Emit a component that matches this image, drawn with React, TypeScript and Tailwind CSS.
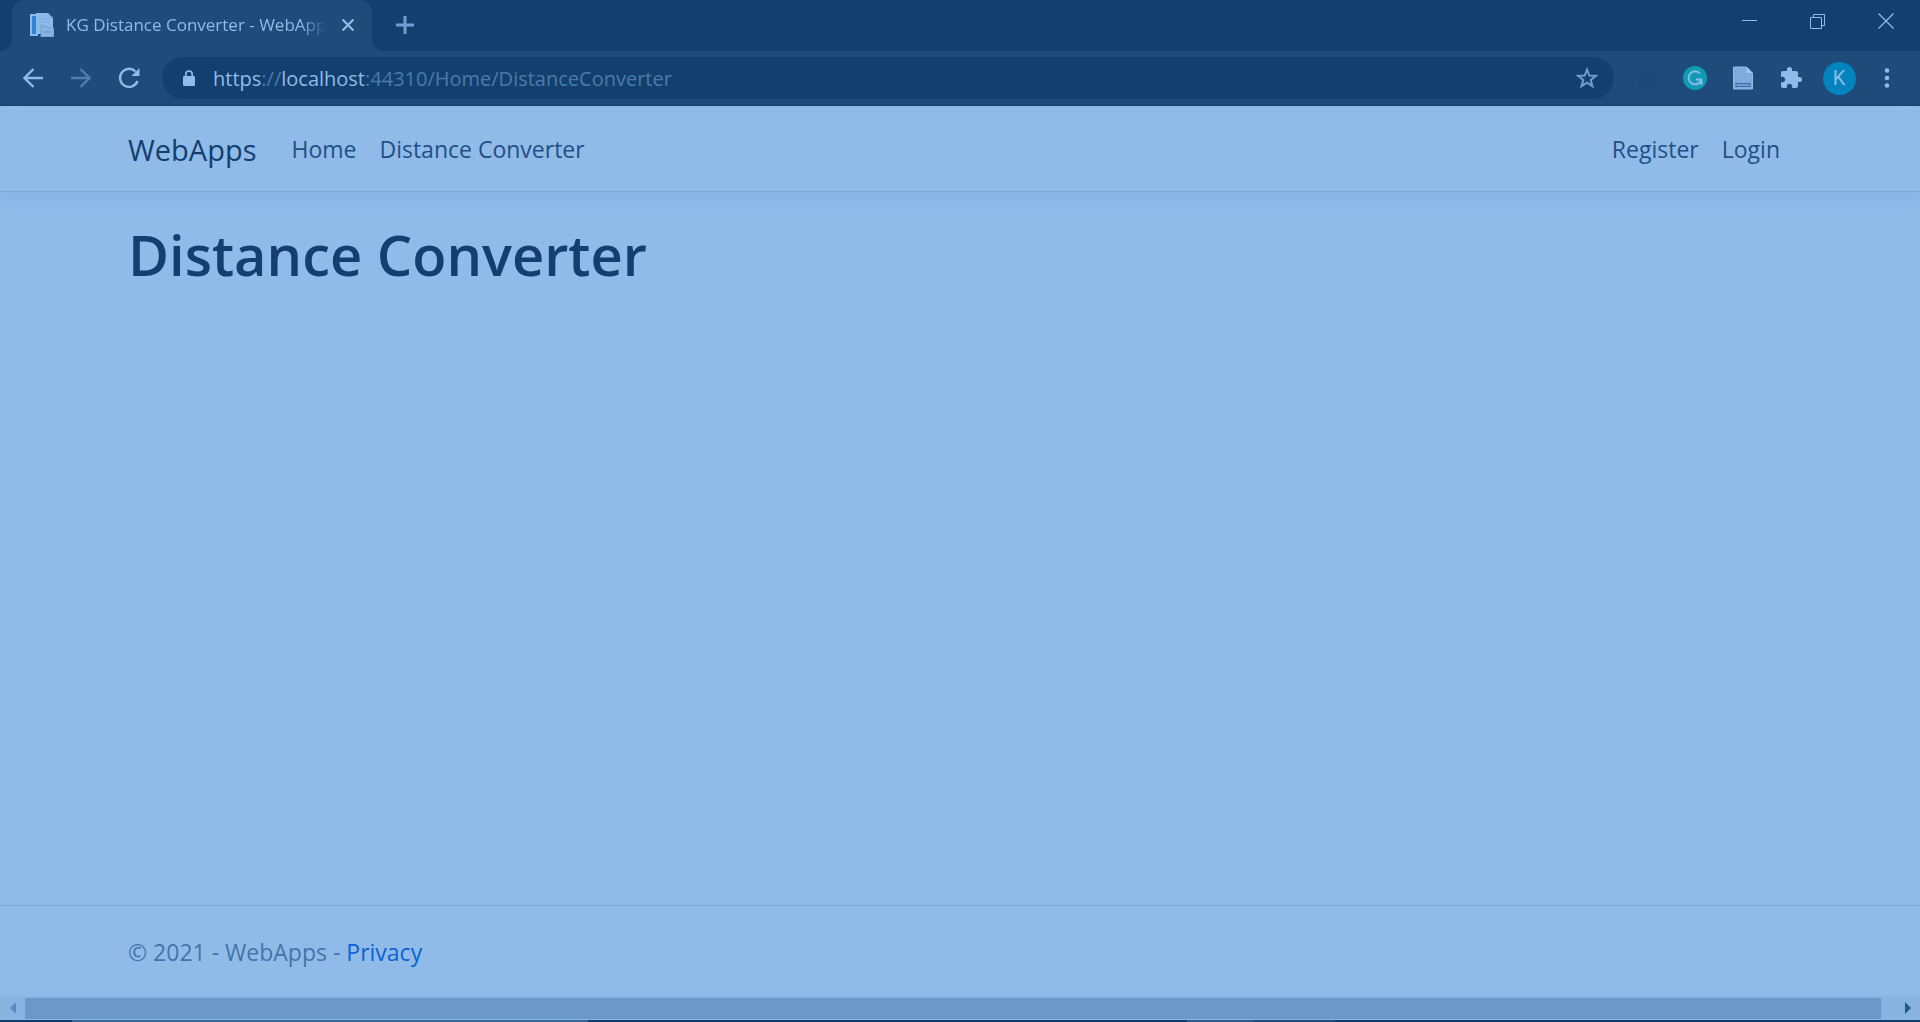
import React from "react";

const iconButton = "flex h-9 w-9 shrink-0 items-center justify-center";

function TabStrip() {
  return (
    <div className="flex h-[51px] items-stretch bg-[#133f6e]">
      <div className="flex w-3 items-end bg-[#1f4b7a]">
        <div className="h-full w-full rounded-br-xl bg-[#133f6e]" />
      </div>
      <div className="bg-[#133f6e]">
        <div className="flex h-full w-[360px] items-center rounded-t-xl bg-[#1f4b7a] pb-0.5 pl-[18px] pr-3">
          <svg className="h-6 w-6 shrink-0" viewBox="0 0 24 24" aria-hidden="true">
            <rect x="0" y="1" width="8" height="22" fill="#8dbae8" />
            <rect x="2" y="3" width="4" height="18" fill="#2f86d8" />
            <path d="M6 0H18L23 5V21H6Z" fill="#8dbae8" />
            <path d="M18 0V5H23M9 6H16M9 9H20M9 12H12" fill="none" stroke="#7dabdc" />
            <path d="M11 13H16L18 15H24V24H11Z" fill="#86b4e4" stroke="#6c9ccf" />
            <path d="M14 19H21" stroke="#5e91c8" />
          </svg>
          <div className="ml-3 w-[264px]">
            <span className="inline-block whitespace-nowrap text-[17px] text-[#8fbbe9] [mask-image:linear-gradient(to_right,black_90%,transparent)]">
              KG Distance Converter - WebApp
            </span>
          </div>
          <button type="button" aria-label="Close tab" className="ml-2 flex h-6 w-6 items-center justify-center">
            <svg className="h-3 w-3" viewBox="0 0 12 12" stroke="#8fbbe9" strokeWidth="2.2">
              <path d="M0.5 0.5L11.5 11.5M11.5 0.5L0.5 11.5" />
            </svg>
          </button>
        </div>
      </div>
      <div className="flex w-3 bg-[#1f4b7a]">
        <div className="h-full w-full rounded-bl-xl bg-[#133f6e]" />
      </div>
      <button type="button" aria-label="New tab" className="flex w-[42px] items-center justify-center pb-0.5">
        <svg className="h-[18px] w-[18px]" viewBox="0 0 18 18" stroke="#6f9dd0" strokeWidth="3">
          <path d="M9 0V18M0 9H18" />
        </svg>
      </button>
      <div className="ml-auto flex h-[42px]">
        <button type="button" aria-label="Minimize" className="flex w-[68px] items-center justify-center">
          <svg className="h-4 w-4" viewBox="0 0 16 16" shapeRendering="crispEdges">
            <path d="M0.5 7.5H15.5" stroke="#8fbbe9" />
          </svg>
        </button>
        <button type="button" aria-label="Restore" className="flex w-[68px] items-center justify-center">
          <svg className="h-4 w-4" viewBox="0 0 16 16" fill="none" stroke="#8fbbe9">
            <path d="M1.5 4.5H12.5V15.5H1.5ZM4.5 4.5V1.5H15.5V12.5H12.5" />
          </svg>
        </button>
        <button type="button" aria-label="Close" className="flex w-[69px] items-center justify-center">
          <svg className="h-4 w-4" viewBox="0 0 16 16" stroke="#8fbbe9" strokeWidth="1.3">
            <path d="M0.5 0.5L15.5 15.5M15.5 0.5L0.5 15.5" />
          </svg>
        </button>
      </div>
    </div>
  );
}

function Toolbar() {
  return (
    <div className="flex h-[55px] items-center border-b border-[#173f6b] bg-[#1f4b7a] px-[15px]">
      <div className="flex gap-3">
        <button type="button" aria-label="Back" className={iconButton}>
          <svg className="h-5 w-5" viewBox="0 0 20 20" fill="none" stroke="#8fbbe9" strokeWidth="2.3">
            <path d="M20 10H2M10.5 1L1.5 10L10.5 19" />
          </svg>
        </button>
        <button type="button" aria-label="Forward" className={iconButton}>
          <svg className="h-5 w-5" viewBox="0 0 20 20" fill="none" stroke="#4e7eb0" strokeWidth="2.3">
            <path d="M0 10H18M9.5 1L18.5 10L9.5 19" />
          </svg>
        </button>
        <button type="button" aria-label="Reload" className={iconButton}>
          <svg className="h-[22px] w-[22px]" viewBox="0 0 22 22" fill="none">
            <path d="M17.5 4.5A9 9 0 1 0 19.5 14" stroke="#8fbbe9" strokeWidth="2.4" />
            <path d="M21.5 1V9H13.5Z" fill="#8fbbe9" />
          </svg>
        </button>
      </div>
      <div className="ml-[15px] flex h-[42px] min-w-0 flex-1 items-center rounded-full bg-[#133f6e] pl-[21px] pr-[9px]">
        <svg className="h-4 w-3 shrink-0" viewBox="0 0 12 16" aria-hidden="true">
          <path d="M2.8 7V4.2a3.2 3.2 0 0 1 6.4 0V7" fill="none" stroke="#8fbbe9" strokeWidth="1.7" />
          <rect x="0" y="6" width="12" height="10" rx="1.3" fill="#8fbbe9" />
        </svg>
        <a href="#" className="ml-[18px] flex-1 whitespace-nowrap pt-0.5 text-[20px] text-[#4a7aad]">
          <span className="text-[#8fbbe9]">https</span>://<span className="text-[#8fbbe9]">localhost</span>
          :44310/Home/DistanceConverter
        </a>
        <button type="button" aria-label="Bookmark this page" className={iconButton}>
          <svg className="h-[22px] w-[22px]" viewBox="0 0 22 22" fill="none" stroke="#6f9dd0" strokeWidth="2">
            <path d="M11 2.6L13.3 8.6L19.8 8.9L14.7 13L16.5 19.2L11 15.7L5.5 19.2L7.3 13L2.2 8.9L8.7 8.6Z" />
          </svg>
        </button>
      </div>
      <div className="ml-[15px] flex gap-3">
        <button type="button" aria-label="Extension" className={iconButton}>
          <svg className="h-6 w-6" viewBox="0 0 24 24" fill="#1d4977">
            <path d="M10 1Q15 1 14 6Q22 7 22 15Q20 23 12 24Q3 23 2 15Q2 9 7 7Q8 3 10 1Z" />
            <circle cx="13" cy="15" r="5" fill="none" stroke="#1f4b7a" strokeWidth="1.5" />
          </svg>
        </button>
        <button type="button" aria-label="Grammar extension" className={iconButton}>
          <svg className="h-6 w-6" viewBox="0 0 24 24">
            <circle cx="12" cy="12" r="12" fill="#0f9bb4" />
            <path d="M17 7.5A6.5 6.5 0 1 0 18 14.5M13 13.5H18.5V19" fill="none" stroke="#8fbbe9" strokeWidth="1.9" />
          </svg>
        </button>
        <button type="button" aria-label="Document extension" className={iconButton}>
          <svg className="h-6 w-6" viewBox="0 0 24 24">
            <path d="M2.5 1H15.5L21.5 7V23H2.5Z" fill="#7fabdc" stroke="#8fbbe9" />
            <path d="M15.5 1V7H21.5Z" fill="#a0c7ef" />
            <rect x="5" y="17.5" width="14" height="3" fill="#6c9ccf" stroke="#3c6da2" />
          </svg>
        </button>
        <button type="button" aria-label="Extensions" className={iconButton}>
          <svg className="h-6 w-6" viewBox="0 0 24 24" fill="#8fbbe9">
            <path d="M20.5 11H19V7c0-1.1-.9-2-2-2h-4V3.5a2.5 2.5 0 0 0-5 0V5H4c-1.1 0-1.99.9-1.99 2v3.8H3.5c1.49 0 2.7 1.21 2.7 2.7s-1.21 2.7-2.7 2.7H2V20c0 1.1.9 2 2 2h3.8v-1.5c0-1.49 1.21-2.7 2.7-2.7s2.7 1.21 2.7 2.7V22H17c1.1 0 2-.9 2-2v-4h1.5a2.5 2.5 0 0 0 0-5z" />
          </svg>
        </button>
        <button type="button" aria-label="Profile" className={iconButton}>
          <span className="flex h-[33px] w-[33px] items-center justify-center rounded-full bg-[#0283bd] font-[Roboto] text-[20px] text-[#8fbbe9]">
            K
          </span>
        </button>
        <button type="button" aria-label="Menu" className={iconButton}>
          <svg className="h-5 w-1" viewBox="0 0 4 20" fill="#8fbbe9" overflow="visible">
            <circle cx="2" cy="2.5" r="2.3" />
            <circle cx="2" cy="10" r="2.3" />
            <circle cx="2" cy="17.5" r="2.3" />
          </svg>
        </button>
      </div>
    </div>
  );
}

function SiteHeader() {
  return (
    <header className="border-b border-[#7da9d8] shadow-[0_6px_18px_rgba(19,63,110,0.08)]">
      <nav className="flex h-[85px] items-center px-32 pt-0.5 text-[23px] text-[#1f5086]">
        <a href="#" className="mr-[35px] text-[29px] text-[#133f6e]">WebApps</a>
        <div className="flex gap-[23px]">
          <a href="#">Home</a>
          <a href="#">Distance Converter</a>
        </div>
        <div className="ml-auto mr-3 flex gap-[23px]">
          <a href="#">Register</a>
          <a href="#">Login</a>
        </div>
      </nav>
    </header>
  );
}

function ScrollBar() {
  return (
    <div className="flex h-6 items-center bg-[#89b4e2]">
      <button type="button" aria-label="Scroll left" className="flex w-[25px] items-center justify-center">
        <svg className="h-3 w-[6px]" viewBox="0 0 6 12" fill="#5d8dc0">
          <path d="M6 0V12L0 6Z" />
        </svg>
      </button>
      <div className="h-[21px] flex-1 bg-[#6c98c7]" />
      <button type="button" aria-label="Scroll right" className="flex w-[39px] items-center justify-end pr-[9px]">
        <svg className="h-3 w-[6px]" viewBox="0 0 6 12" fill="#25568d">
          <path d="M0 0V12L6 6Z" />
        </svg>
      </button>
    </div>
  );
}

function WindowEdge() {
  return (
    <div className="flex h-0.5 bg-[#0f3c6c]">
      <div className="w-[72px]" />
      <div className="w-[516px] bg-[#376698]" />
      <div className="w-[599px]" />
      <div className="w-[66px] bg-[#2d5b8c]" />
      <div className="w-[82px] bg-[#1f4b7a]" />
    </div>
  );
}

export default function App() {
  return (
    <div className="flex h-screen flex-col overflow-hidden bg-[#90bbe9] font-['Open_Sans','Noto_Sans',sans-serif]">
      <TabStrip />
      <Toolbar />
      <SiteHeader />
      <main className="flex-1 px-32 pt-[22px]">
        <h1 className="text-[56px] font-semibold leading-[80px] text-[#133f6e]">Distance Converter</h1>
      </main>
      <footer className="flex h-[91px] items-center border-t border-[#7da9d8] px-32 pt-[3px]">
        <p className="text-[23px] text-[#4374a8]">
          © 2021 - WebApps - <a href="#" className="text-[#0b62d6]">Privacy</a>
        </p>
      </footer>
      <ScrollBar />
      <WindowEdge />
    </div>
  );
}
